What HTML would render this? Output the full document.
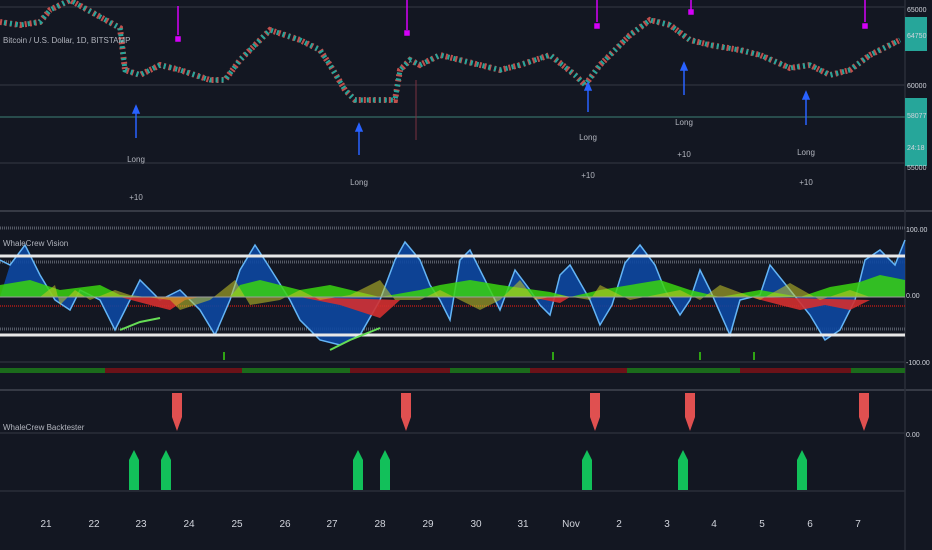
<!DOCTYPE html>
<html><head><style>
body{margin:0;background:#131722;width:932px;height:550px;overflow:hidden;font-family:"Liberation Sans",sans-serif}
svg{display:block}
</style></head><body>
<svg width="932" height="550" viewBox="0 0 932 550" xmlns="http://www.w3.org/2000/svg">
<rect width="932" height="550" fill="#131722"/>
<g stroke="#2a2e39" stroke-width="1.5">
<line x1="0" y1="7" x2="905" y2="7"/><line x1="0" y1="85" x2="905" y2="85"/><line x1="0" y1="163" x2="905" y2="163"/>
<line x1="0" y1="211" x2="932" y2="211" stroke="#363a45" stroke-width="2"/>
<line x1="0" y1="390" x2="932" y2="390" stroke="#363a45" stroke-width="2"/>
<line x1="0" y1="433" x2="905" y2="433"/><line x1="0" y1="491" x2="905" y2="491"/>
<line x1="0" y1="362" x2="905" y2="362"/>
<line x1="905" y1="0" x2="905" y2="550" stroke="#2a2e39"/>
</g>
<line x1="0" y1="117" x2="905" y2="117" stroke="#2f5f5a" stroke-width="1.5"/>
<polyline fill="none" stroke="#c0504d" stroke-width="6" stroke-dasharray="2 3" points="0,22 20,25 40,22 50,10 70,0 120,28 125,70 140,75 160,65 180,70 210,80 225,80 240,60 270,30 300,40 320,50 330,65 345,90 355,100 380,100 395,100 400,70 410,60 420,65 440,55 460,60 480,65 500,70 520,65 550,55 575,75 585,85 600,65 630,35 650,20 670,25 690,40 710,45 740,50 760,55 790,68 810,65 830,75 850,70 870,55 900,40"/>
<polyline fill="none" stroke="#26a69a" stroke-width="5" stroke-dasharray="2 4" stroke-dashoffset="2" points="0,22 20,25 40,22 50,10 70,0 120,28 125,70 140,75 160,65 180,70 210,80 225,80 240,60 270,30 300,40 320,50 330,65 345,90 355,100 380,100 395,100 400,70 410,60 420,65 440,55 460,60 480,65 500,70 520,65 550,55 575,75 585,85 600,65 630,35 650,20 670,25 690,40 710,45 740,50 760,55 790,68 810,65 830,75 850,70 870,55 900,40"/>
<line x1="416" y1="80" x2="416" y2="140" stroke="#7a3040"/>
<text x="3" y="43" fill="#b2b5be" font-size="8">Bitcoin / U.S. Dollar, 1D, BITSTAMP</text>
<g stroke="#d500f9" stroke-width="1.5" fill="#d500f9">
<line x1="178" y1="6" x2="178" y2="35"/><rect x="176" y="37" width="4" height="4"/>
<line x1="407" y1="0" x2="407" y2="30"/><rect x="405" y="31" width="4" height="4"/>
<line x1="597" y1="0" x2="597" y2="22"/><rect x="595" y="24" width="4" height="4"/>
<line x1="691" y1="0" x2="691" y2="10"/><rect x="689" y="10" width="4" height="4"/>
<line x1="865" y1="0" x2="865" y2="22"/><rect x="863" y="24" width="4" height="4"/>
</g>
<g stroke="#2962ff" stroke-width="1.5" fill="#2962ff">
<line x1="136" y1="110" x2="136" y2="138"/><path d="M133,113 L136,106 L139,113Z"/>
<line x1="359" y1="130" x2="359" y2="155"/><path d="M356,131 L359,124 L362,131Z"/>
<line x1="588" y1="88" x2="588" y2="112"/><path d="M585,90 L588,83 L591,90Z"/>
<line x1="684" y1="70" x2="684" y2="95"/><path d="M681,70 L684,63 L687,70Z"/>
<line x1="806" y1="98" x2="806" y2="125"/><path d="M803,99 L806,92 L809,99Z"/>
</g>
<g fill="#b2b5be" font-size="8" text-anchor="middle">
<text x="136" y="162">Long</text><text x="136" y="200">+10</text>
<text x="359" y="185">Long</text>
<text x="588" y="140">Long</text><text x="588" y="178">+10</text>
<text x="684" y="125">Long</text><text x="684" y="157">+10</text>
<text x="806" y="155">Long</text><text x="806" y="185">+10</text>
</g>
<rect x="905" y="17" width="22" height="34" fill="#26a69a"/>
<rect x="905" y="98" width="22" height="68" fill="#26a69a"/>
<g fill="#d1d4dc" font-size="7">
<text x="907" y="12">65000</text><text x="907" y="38">64750</text><text x="907" y="88">60000</text>
<text x="907" y="118">58077</text><text x="907" y="150">24:18</text><text x="907" y="170">55000</text>
<text x="906" y="232">100.00</text><text x="906" y="298">0.00</text><text x="906" y="365">-100.00</text>
<text x="906" y="437">0.00</text>
</g>
<g stroke-width="3" fill="none">
<line x1="0" y1="228" x2="905" y2="228" stroke="#555a66" stroke-dasharray="1 1"/>
<line x1="0" y1="262" x2="905" y2="262" stroke="#555a66" stroke-dasharray="1 1"/>
<line x1="0" y1="329" x2="905" y2="329" stroke="#555a66" stroke-dasharray="1 1"/>
<line x1="0" y1="306" x2="905" y2="306" stroke="#8b1a1a" stroke-width="2" stroke-dasharray="1 1"/>
</g>
<path d="M0,297 L10,265 L25,245 L40,275 L55,300 L70,310 L80,290 L100,300 L115,330 L125,310 L140,280 L160,300 L180,290 L200,310 L215,335 L230,300 L240,270 L255,245 L268,265 L290,300 L300,320 L320,340 L340,345 L360,335 L380,300 L395,260 L405,242 L420,260 L430,285 L440,300 L450,320 L460,260 L470,250 L490,290 L500,310 L515,270 L530,290 L540,305 L550,315 L560,275 L570,265 L590,300 L600,325 L612,305 L625,263 L640,245 L655,265 L665,290 L680,315 L690,300 L700,270 L710,290 L730,335 L740,300 L760,295 L770,265 L790,290 L810,315 L825,340 L840,330 L855,300 L865,260 L880,250 L895,265 L905,240 L905,297 Z" fill="#0d47a1" opacity="0.9"/>
<polyline fill="none" stroke="#64b5f6" stroke-width="1.5" points="0,260 10,265 25,245 40,275 55,300 70,310 80,290 100,300 115,330 125,310 140,280 160,300 180,290 200,310 215,335 230,300 240,270 255,245 268,265 290,300 300,320 320,340 340,345 360,335 380,300 395,260 405,242 420,260 430,285 440,300 450,320 460,260 470,250 490,290 500,310 515,270 530,290 540,305 550,315 560,275 570,265 590,300 600,325 612,305 625,263 640,245 655,265 665,290 680,315 690,300 700,270 710,290 730,335 740,300 760,295 770,265 790,290 810,315 825,340 840,330 855,300 865,260 880,250 895,265 905,240"/>
<path d="M0,297 L0,285 L30,280 L60,290 L100,285 L120,295 L140,297 M230,297 L240,285 L260,280 L300,290 L330,285 L380,297 L420,290 L440,285 L470,280 L500,285 L550,292 L570,297 L600,290 L630,285 L660,280 L690,290 L720,297 L760,290 L800,297 L830,287 L860,282 L880,275 L905,280 L905,297 Z" fill="#39d40f" opacity="0.85"/>
<path d="M120,297 L150,305 L170,310 L185,300 L200,297 Z M300,297 L340,305 L380,318 L400,300 Z M530,297 L560,303 L570,297 Z M750,297 L780,305 L800,310 L825,305 L850,310 L870,300 Z" fill="#d32f2f" opacity="0.9"/>
<path d="M40,297 L55,285 L60,305 L75,290 L90,300 L115,290 L130,295 L170,300 L180,310 L210,300 L235,280 L250,305 L280,300 L300,290 L320,300 L350,295 L380,280 L395,300 L420,300 L440,290 L460,300 L480,310 L500,300 L520,280 L535,300 L560,295 L590,300 L600,285 L630,300 L680,290 L700,300 L720,285 L760,300 L790,283 L820,300 L850,290 L870,297 Z" fill="#c8c828" opacity="0.55"/>
<line x1="0" y1="297" x2="905" y2="297" stroke="#9e9e9e" stroke-width="1"/>
<line x1="0" y1="256" x2="905" y2="256" stroke="#e8e8e8" stroke-width="3"/>
<line x1="0" y1="335" x2="905" y2="335" stroke="#e8e8e8" stroke-width="3"/>
<polyline fill="none" stroke="#66dd55" stroke-width="2" points="120,330 140,322 160,318"/>
<polyline fill="none" stroke="#66dd55" stroke-width="2" points="330,350 350,340 380,328"/>
<text x="3" y="246" fill="#b2b5be" font-size="8">WhaleCrew Vision</text>
<g stroke="#39d40f" stroke-width="1.5">
<line x1="224" y1="352" x2="224" y2="360"/><line x1="553" y1="352" x2="553" y2="360"/><line x1="700" y1="352" x2="700" y2="360"/><line x1="754" y1="352" x2="754" y2="360"/>
</g>
<rect x="0" y="368" width="905" height="5" fill="#1b6b1b"/>
<rect x="105" y="368" width="137" height="5" fill="#6b1218"/>
<rect x="350" y="368" width="100" height="5" fill="#6b1218"/>
<rect x="530" y="368" width="97" height="5" fill="#6b1218"/>
<rect x="740" y="368" width="111" height="5" fill="#6b1218"/>
<text x="3" y="430" fill="#b2b5be" font-size="8">WhaleCrew Backtester</text>
<g fill="#e05050">
<path d="M172,393 h10 v24 l-5,14 l-5,-14Z"/><path d="M401,393 h10 v24 l-5,14 l-5,-14Z"/>
<path d="M590,393 h10 v24 l-5,14 l-5,-14Z"/><path d="M685,393 h10 v24 l-5,14 l-5,-14Z"/>
<path d="M859,393 h10 v24 l-5,14 l-5,-14Z"/>
</g>
<g fill="#12c05a">
<path d="M129,490 v-30 l5,-10 l5,10 v30Z"/><path d="M161,490 v-30 l5,-10 l5,10 v30Z"/>
<path d="M353,490 v-30 l5,-10 l5,10 v30Z"/><path d="M380,490 v-30 l5,-10 l5,10 v30Z"/>
<path d="M582,490 v-30 l5,-10 l5,10 v30Z"/><path d="M678,490 v-30 l5,-10 l5,10 v30Z"/>
<path d="M797,490 v-30 l5,-10 l5,10 v30Z"/>
</g>
<g fill="#d1d4dc" font-size="10" text-anchor="middle">
<text x="46" y="527">21</text><text x="94" y="527">22</text><text x="141" y="527">23</text><text x="189" y="527">24</text>
<text x="237" y="527">25</text><text x="285" y="527">26</text><text x="332" y="527">27</text><text x="380" y="527">28</text>
<text x="428" y="527">29</text><text x="476" y="527">30</text><text x="523" y="527">31</text><text x="571" y="527">Nov</text>
<text x="619" y="527">2</text><text x="667" y="527">3</text><text x="714" y="527">4</text><text x="762" y="527">5</text>
<text x="810" y="527">6</text><text x="858" y="527">7</text>
</g>
</svg>
</body></html>
